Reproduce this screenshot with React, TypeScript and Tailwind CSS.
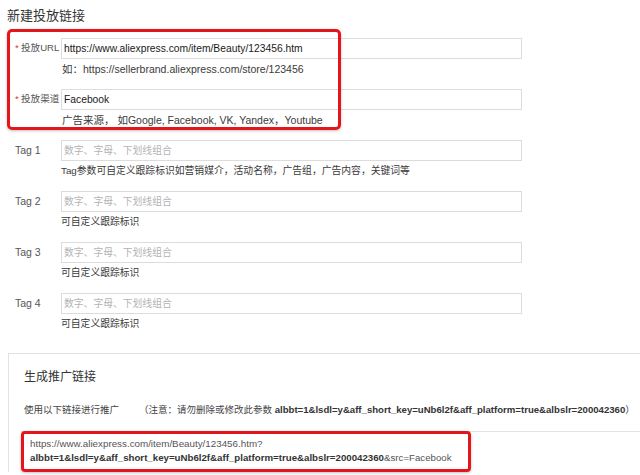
import React from 'react';

const TAGS = [
  { label: 'Tag 1', hint: 'Tag参数可自定义跟踪标识如营销媒介，活动名称，广告组，广告内容，关键词等' },
  { label: 'Tag 2', hint: '可自定义跟踪标识' },
  { label: 'Tag 3', hint: '可自定义跟踪标识' },
  { label: 'Tag 4', hint: '可自定义跟踪标识' },
];

const PARAMS = 'albbt=1&lsdl=y&aff_short_key=uNb6l2f&aff_platform=true&albslr=200042360';

const FormRow = ({
  label,
  required,
  value,
  placeholder,
  hint,
  cjkHint,
}: {
  label: string;
  required?: boolean;
  value?: string;
  placeholder?: string;
  hint: string;
  cjkHint?: boolean;
}) => (
  <div className="flex">
    <div
      className={
        required
          ? 'flex h-[21px] w-[61px] shrink-0 items-center pl-[15px] text-[9.6px] text-[#555]'
          : 'flex h-[21px] w-[61px] shrink-0 items-center pl-[15px] text-[10.5px] text-[#555]'
      }
    >
      {required && <span className="w-[6px] text-[#e0301e]">*</span>}
      <span className="whitespace-nowrap">{label}</span>
    </div>
    <div className="flex flex-col">
      <input
        readOnly
        defaultValue={value}
        placeholder={placeholder}
        className="h-[21px] w-[461px] border border-[#dcdcdc] px-[2px] text-[10.3px] text-[#1a1a1a] outline-none placeholder:text-[9.8px] placeholder:text-[#b3b3b3]"
      />
      <p
        className={
          cjkHint
            ? 'mt-[3px] text-[9.8px] leading-[14px] whitespace-nowrap text-[#3a3a3a]'
            : 'mt-[3px] pl-[1px] text-[10.5px] leading-[14px] whitespace-nowrap text-[#3a3a3a]'
        }
      >
        {hint}
      </p>
    </div>
  </div>
);

export default function App() {
  return (
    <div className="relative h-[475px] w-[640px] overflow-hidden bg-white font-['Liberation_Sans','Noto_Sans_CJK_SC',sans-serif] text-[#333]">
      <h1 className="pt-[7px] pl-[7px] text-[13px] leading-[18px] text-[#333]">新建投放链接</h1>

      <div className="mt-[13px] flex flex-col gap-[13px]">
        <FormRow
          required
          label="投放URL"
          value="https://www.aliexpress.com/item/Beauty/123456.htm"
          hint="如：https://sellerbrand.aliexpress.com/store/123456"
        />
        <FormRow
          required
          label="投放渠道"
          value="Facebook"
          hint="广告来源， 如Google, Facebook, VK, Yandex，Youtube"
        />
        {TAGS.map((tag) => (
          <FormRow key={tag.label} label={tag.label} placeholder="数字、字母、下划线组合" hint={tag.hint} cjkHint />
        ))}
      </div>

      {/* highlight over the required fields */}
      <div className="pointer-events-none absolute top-[29px] left-[7px] h-[101px] w-[334px] rounded-[5px] border-[3px] border-[#e4161c] shadow-[0_1px_3px_rgba(0,0,0,0.25)]" />

      <div className="mt-[22px] ml-[8px] border-t border-l border-[#e3e3e3] pl-[15px]">
        <h2 className="pt-[15px] text-[12px] leading-[16px] text-[#333]">生成推广链接</h2>
        <p className="mt-[18px] text-[9.5px] leading-[14px] whitespace-nowrap text-[#444]">
          使用以下链接进行推广
          <span className="ml-[20px]">（注意：请勿删除或修改此参数 </span>
          <span className="text-[9.6px] font-bold text-[#333]">{PARAMS}</span>
          <span>）</span>
        </p>
        <div className="mt-[14px] -ml-[3px] border-t border-[#e3e3e3]">
          <div className="-mt-px w-[450px] rounded-[4px] border-[3px] border-[#e4161c] pt-[3px] pb-[4px] pl-[6px] shadow-[0_1px_3px_rgba(0,0,0,0.25)]">
            <p className="text-[9.8px] leading-[14px] text-[#555]">https://www.aliexpress.com/item/Beauty/123456.htm?</p>
            <p className="text-[9.7px] leading-[14px] whitespace-nowrap text-[#555]">
              <span className="font-bold text-[#333]">{PARAMS}</span>&amp;src=Facebook
            </p>
          </div>
        </div>
      </div>
    </div>
  );
}
